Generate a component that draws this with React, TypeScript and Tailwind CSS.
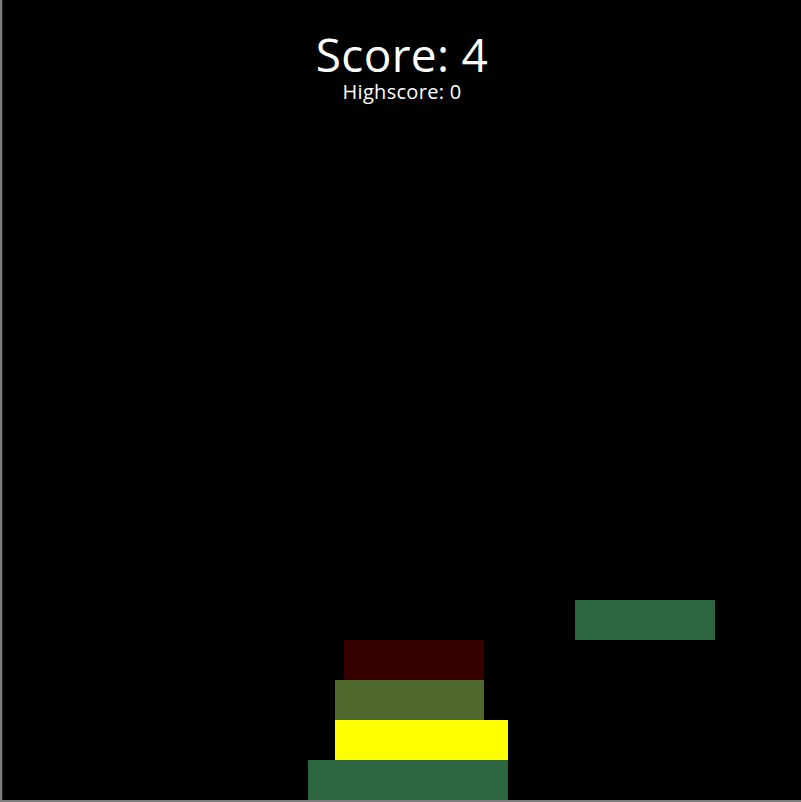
import React from 'react';

type Block = { left: number; top: number; width: number; color: string };

// stacked blocks, coordinates relative to the play field
const stack: Block[] = [
  { left: 305, top: 760, width: 200, color: 'bg-[#2b6640]' },
  { left: 332, top: 720, width: 173, color: 'bg-[#ffff00]' },
  { left: 332, top: 680, width: 149, color: 'bg-[#4f682d]' },
  { left: 341, top: 640, width: 140, color: 'bg-[#360000]' },
];

const moving: Block = { left: 572, top: 600, width: 140, color: 'bg-[#2b6640]' };

function Piece({ block }: { block: Block }) {
  return (
    <div
      className={`absolute h-[40px] ${block.color}`}
      style={{ left: block.left, top: block.top, width: block.width }}
    />
  );
}

export default function App() {
  return (
    <div className="w-[801px] h-[802px] bg-black border-l-[2px] border-b-[2px] border-[#7d7d7d] overflow-hidden">
      <div className="relative w-full h-full border-l border-[#1c1c1c] font-['Open_Sans',sans-serif] text-white">
        <div className="flex flex-col items-center pt-[29px]">
          <div className="text-[46px] leading-[50px] tracking-[0.3px]">Score: 4</div>
          <div className="mt-[3px] text-[20px] leading-[20px] tracking-[0.3px]">Highscore: 0</div>
        </div>
        {stack.map((b, i) => (
          <Piece key={i} block={b} />
        ))}
        <Piece block={moving} />
      </div>
    </div>
  );
}
